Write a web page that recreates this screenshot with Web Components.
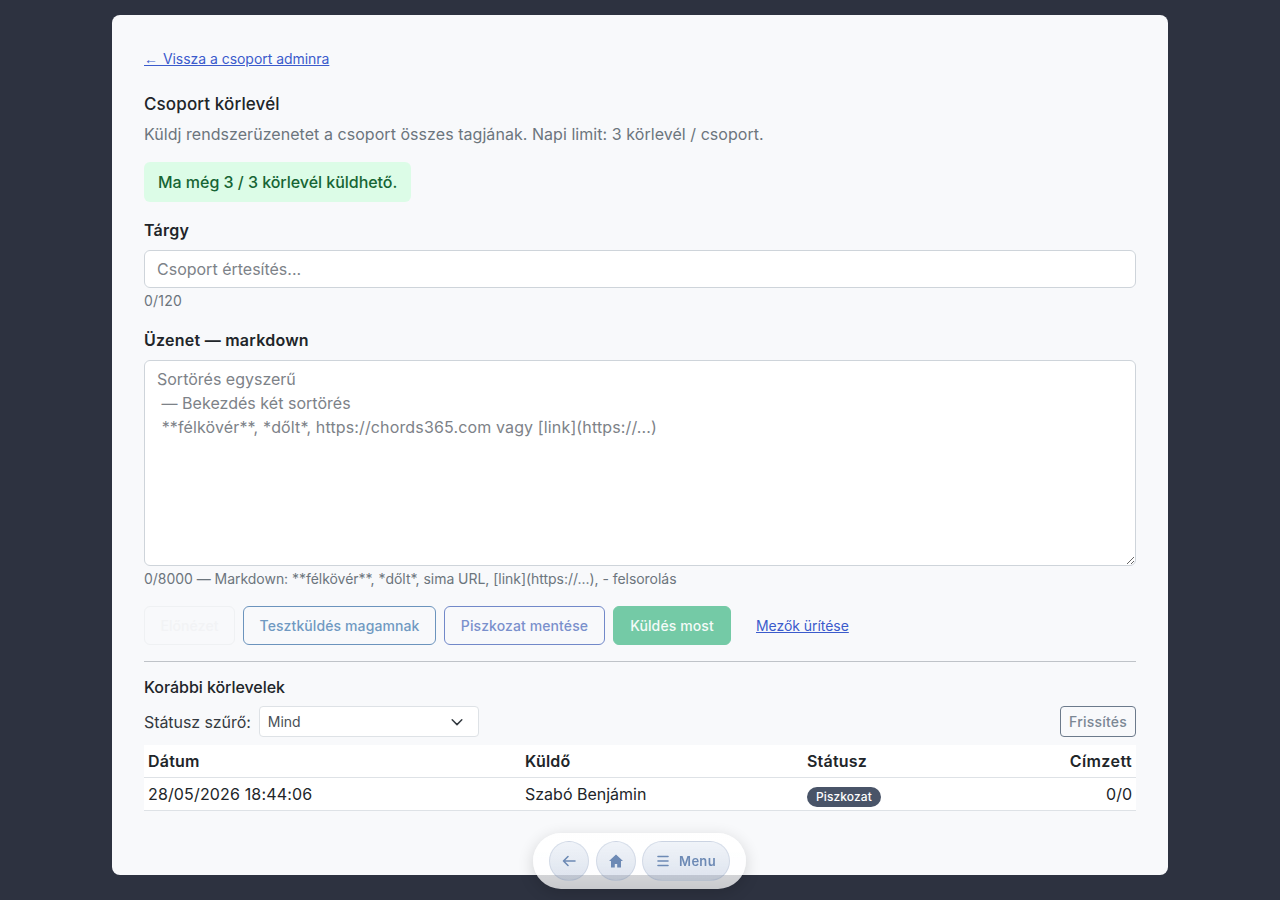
<!DOCTYPE html>
<html lang="hu">
<head>
<meta charset="utf-8">
<title>Csoport körlevél</title>
<style>
  html, body { margin: 0; height: 100%; overflow: hidden; }
  body {
    background: #2d3240;
    font-family: Inter, "Liberation Sans", sans-serif;
    color: #212529;
    font-size: 16px;
  }
</style>
</head>
<body>
<broadcast-page>
  <a-link slot="back" href="#"><span style="font-family:'Liberation Sans',sans-serif;letter-spacing:1px">←</span> Vissza a csoport adminra</a-link>

  <field-row label="Tárgy" hint="0/120" style="--label-ls:.2px;--hint-ls:.2px">
    <input type="text" placeholder="Csoport értesítés...">
  </field-row>

  <field-row label="Üzenet — markdown" hint="0/8000 — Markdown: **félkövér**, *dőlt*, sima URL, [link](https://...), - felsorolás" style="--label-ls:.25px;--hint-ls:-.035px">
    <note-area></note-area>
  </field-row>

  <action-bar></action-bar>
  <history-panel></history-panel>
</broadcast-page>
<float-nav></float-nav>

<script>
class ALink extends HTMLElement {
  connectedCallback() {
    const shadow = this.attachShadow({ mode: 'open' });
    shadow.innerHTML = `
      <style>
        :host { display: inline-block; font-size: 14px; line-height: 21px; letter-spacing: -.04px; }
        a { color: #3b5bcc; text-decoration: underline; }
      </style>
      <a href="${this.getAttribute('href') || '#'}"><slot></slot></a>
    `;
  }
}
customElements.define('a-link', ALink);

class FieldRow extends HTMLElement {
  connectedCallback() {
    const shadow = this.attachShadow({ mode: 'open' });
    shadow.innerHTML = `
      <style>
        :host { display: block; margin-bottom: 17px; }
        label { display: block; font-size: 16px; line-height: 24px; font-weight: 600; color: #212529; margin-bottom: 8px; letter-spacing: var(--label-ls, 0); }
        .hint { font-size: 14px; line-height: 21px; color: #6c757d; margin-top: 2px; letter-spacing: var(--hint-ls, 0); }
        ::slotted(input) {
          display: block;
          box-sizing: border-box;
          width: 100%;
          height: 38px;
          border: 1px solid #ced4da;
          border-radius: 6px;
          background: #fff;
          color: #212529;
          font: 16px/24px Inter, "Liberation Sans", sans-serif;
          padding: 6px 12px;
          margin: 0;
          outline: none;
        }
        ::slotted(input)::placeholder { color: #7d8288; opacity: 1; }
      </style>
      <label>${this.getAttribute('label')}</label>
      <slot></slot>
      <div class="hint">${this.getAttribute('hint')}</div>
    `;
  }
}
customElements.define('field-row', FieldRow);

// placeholder lines sit over the textarea, so each line can have its own tracking
class NoteArea extends HTMLElement {
  connectedCallback() {
    const shadow = this.attachShadow({ mode: 'open' });
    shadow.innerHTML = `
      <style>
        :host { display: block; position: relative; height: 206px; }
        textarea {
          display: block; box-sizing: border-box; width: 100%; height: 206px;
          border: 1px solid #ced4da; border-radius: 6px; background: #fff; margin: 0;
          padding: 6px 12px; outline: none; resize: vertical;
          font: 16px/24px Inter, "Liberation Sans", sans-serif;
        }
        .ph {
          position: absolute; left: 13px; top: 7px; pointer-events: none;
          font-size: 16px; line-height: 24px; color: #7d8288; white-space: pre;
        }
        .ph div:nth-child(2) { letter-spacing: .03px; }
        .ph div:nth-child(3) { letter-spacing: .14px; }
      </style>
      <textarea aria-label="Üzenet"></textarea>
      <div class="ph"><div>Sortörés egyszerű</div><div> — Bekezdés két sortörés</div><div> **félkövér**, *dőlt*, https://chords365.com vagy [link](https://...)</div></div>
    `;
  }
}
customElements.define('note-area', NoteArea);

class ActionBar extends HTMLElement {
  connectedCallback() {
    const shadow = this.attachShadow({ mode: 'open' });
    shadow.innerHTML = `
      <style>
        :host { display: flex; align-items: center; gap: 8px; height: 39px; }
        button {
          box-sizing: border-box;
          height: 39px;
          padding: 0;
          border-radius: 6px;
          border: 1px solid;
          background: transparent;
          font: 500 14px Inter, "Liberation Sans", sans-serif;
          letter-spacing: .1px;
          white-space: nowrap;
        }
        .preview { width: 91px; border-color: #eff1f3; color: #f2f3f5; }
        .test { width: 193px; border-color: #6c94bd; color: #7099c2; }
        .draft { width: 161px; border-color: #7289c9; color: #7a90cc; }
        .send { width: 118px; background: #74caa6; border-color: #74caa6; color: #f4fbf8; }
        a { margin-left: 17px; font-size: 14px; font-weight: 400; letter-spacing: -.05px; color: #3b5bcc; text-decoration: underline; }
      </style>
      <button class="preview" disabled>Előnézet</button>
      <button class="test">Tesztküldés magamnak</button>
      <button class="draft">Piszkozat mentése</button>
      <button class="send">Küldés most</button>
      <a href="#">Mezők ürítése</a>
    `;
  }
}
customElements.define('action-bar', ActionBar);

class HistoryPanel extends HTMLElement {
  connectedCallback() {
    const shadow = this.attachShadow({ mode: 'open' });
    shadow.innerHTML = `
      <style>
        :host { display: block; margin-top: 16px; border-top: 1px solid #bfc3c8; padding-top: 13px; }
        h2 { margin: 0 0 7px; font-size: 16px; line-height: 24px; font-weight: 500; color: #212529; letter-spacing: -.05px; }
        .filter { display: flex; align-items: center; gap: 8px; height: 31px; margin-bottom: 8px; }
        .filter label { font-size: 16px; color: #343a40; letter-spacing: -.07px; }
        .select {
          box-sizing: border-box; width: 220px; height: 31px;
          display: flex; align-items: center; justify-content: space-between;
          padding: 0 14px 0 8px;
          background: #fff; border: 1px solid #dee2e6; border-radius: 4px;
          font-size: 14px; color: #495057;
        }
        .select svg { display: block; }
        .refresh {
          box-sizing: border-box; margin-left: auto; height: 31px; width: 76px; padding: 0;
          background: transparent; border: 1px solid #6c7a8b; border-radius: 4px;
          font: 500 14px Inter, "Liberation Sans", sans-serif; letter-spacing: .2px; color: #7b8794;
        }
        table { width: 100%; border-collapse: collapse; background: #fff; table-layout: fixed; font-size: 16px; }
        th, td { height: 32px; padding: 0 4px; border-bottom: 1px solid #dee2e6; text-align: left; color: #212529; }
        th { font-weight: 600; letter-spacing: .2px; }
        th.r { letter-spacing: .4px; }
        .date { letter-spacing: .15px; }
        .r { text-align: right; }
        .badge {
          display: inline-block; height: 20px; line-height: 20px; padding: 0 9px; border-radius: 10px;
          background: #495468; color: #fff; font-size: 12px; font-weight: 500; letter-spacing: .1px; vertical-align: -3px;
        }
      </style>
      <h2>Korábbi körlevelek</h2>
      <div class="filter">
        <label>Státusz szűrő:</label>
        <div class="select">
          <span>Mind</span>
          <svg width="14" height="14" viewBox="0 0 16 16" fill="none" stroke="#343a40" stroke-width="1.7" stroke-linecap="round" stroke-linejoin="round"><path d="m2.500 5.500 5.500 5.500 5.500-5.500"/></svg>
        </div>
        <button class="refresh">Frissítés</button>
      </div>
      <table>
        <colgroup><col style="width:377px"><col style="width:282px"><col style="width:200px"><col></colgroup>
        <tr><th>Dátum</th><th>Küldő</th><th>Státusz</th><th class="r">Címzett</th></tr>
        <tr><td class="date">28/05/2026 18:44:06</td><td>Szabó Benjámin</td><td><span class="badge">Piszkozat</span></td><td class="r">0/0</td></tr>
      </table>
    `;
  }
}
customElements.define('history-panel', HistoryPanel);

class BroadcastPage extends HTMLElement {
  connectedCallback() {
    const shadow = this.attachShadow({ mode: 'open' });
    shadow.innerHTML = `
      <style>
        :host {
          display: block; box-sizing: border-box;
          width: 1056px; height: 860px; margin: 15px auto 0;
          padding: 33px 32px 0;
          background: #f8f9fb; border-radius: 8px;
          overflow: hidden;
        }
        .back { margin-bottom: 22px; height: 21px; }
        h1 { margin: 0 0 5px; font-size: 17px; line-height: 26px; font-weight: 500; color: #212529; letter-spacing: .12px; }
        p { margin: 0 0 16px; font-size: 16px; line-height: 24px; color: #6c757d; letter-spacing: .05px; }
        .quota {
          display: inline-block; box-sizing: border-box; height: 40px; line-height: 40px; padding: 0 14px;
          background: #dcfce7; color: #166534; border-radius: 6px; font-size: 16px; font-weight: 500; letter-spacing: -.03px;
          margin-bottom: 16px; vertical-align: top;
        }
      </style>
      <div class="back"><slot name="back"></slot></div>
      <h1>Csoport körlevél</h1>
      <p>Küldj rendszerüzenetet a csoport összes tagjának. Napi limit: 3 körlevél / csoport.</p>
      <div class="quota">Ma még 3 / 3 körlevél küldhető.</div>
      <slot></slot>
    `;
  }
}
customElements.define('broadcast-page', BroadcastPage);

class FloatNav extends HTMLElement {
  connectedCallback() {
    const shadow = this.attachShadow({ mode: 'open' });
    shadow.innerHTML = `
      <style>
        :host {
          position: fixed; left: 533px; top: 833px; width: 213px; height: 56px;
          box-sizing: border-box; padding: 8px 16px; display: flex; gap: 6px; align-items: center;
          border-radius: 28px;
          background: linear-gradient(rgba(255,255,255,.95), rgba(255,255,255,.74));
          box-shadow: 0 4px 16px rgba(0,0,0,.16);
        }
        button {
          box-sizing: border-box; height: 40px; width: 40px; padding: 0; flex: none;
          display: flex; align-items: center; justify-content: center; gap: 9px;
          border-radius: 20px; border: 1px solid rgba(120,140,175,.2);
          background: linear-gradient(rgba(170,190,220,.18), rgba(140,160,195,.28));
          color: #6d8ab5; font: 600 13px Inter, "Liberation Sans", sans-serif; letter-spacing: .3px;
        }
        .home { margin-left: 1px; }
        .menu { width: 88px; }
        svg { display: block; }
      </style>
      <button aria-label="Vissza">
        <svg width="16" height="16" viewBox="0 0 16 16" fill="none" stroke="#6d8ab5" stroke-width="1.6" stroke-linecap="round" stroke-linejoin="round"><path d="M14 8H2.500M7 3.500 2.500 8 7 12.500"/></svg>
      </button>
      <button class="home" aria-label="Főoldal">
        <svg width="16" height="16" viewBox="0 0 16 16" fill="#6d8ab5"><path fill-rule="evenodd" d="M8 1.500 1 8h2v6.500h10V8h2zM6.800 14.500V11h2.400v3.500z"/></svg>
      </button>
      <button class="menu">
        <svg width="14" height="14" viewBox="0 0 14 14" stroke="#6d8ab5" stroke-width="1.6" stroke-linecap="round"><path d="M2 2.500h10M2 7h10M2 11.500h10"/></svg>
        <span>Menu</span>
      </button>
    `;
  }
}
customElements.define('float-nav', FloatNav);
</script>
</body>
</html>
